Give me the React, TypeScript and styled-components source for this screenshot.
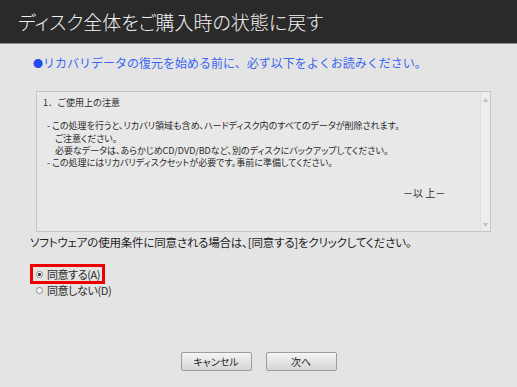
import { createGlobalStyle } from "styled-components";
import styled from "styled-components";

const GlobalStyle = createGlobalStyle`
    html, body {
        margin: 0;
        padding: 0;
        background-color: #e4e4e4;
    }
    body {
        font-family: "Noto Sans CJK JP", "Noto Sans", sans-serif;
        font-feature-settings: "palt";
    }
`

const StyledPage = styled.div`
    width: 517px;
    height: 387px;
    display: flex;
    flex-direction: column;
    background-color: #e4e4e4;
    overflow: hidden;
`

const StyledHeader = styled.div`
    height: 43px;
    display: flex;
    align-items: center;
    padding-left: 18px;
    background-color: #2a2a2a;
    border-bottom: 1px solid #8c8c8c;
    color: #f2f2f2;
    font-size: 19px;
    font-weight: 300;
`

const StyledNotice = styled.div`
    margin-top: 10px;
    padding-left: 33px;
    color: #3a66f0;
    font-size: 12px;
    line-height: 18px;
    font-feature-settings: normal;
`

const StyledBullet = styled.span`
    color: #1f4cf0;
    font-size: 10px;
`

const StyledTextBox = styled.div`
    margin: 18px 26px 0 36px;
    height: 139px;
    display: flex;
    border: 1px solid #c4c4c4;
    background-color: #e8e8e8;
`

const StyledTextContent = styled.div`
    flex-grow: 1;
    padding: 5px 0 0 6px;
    color: #2a2a2a;
    font-size: 9px;
    line-height: 12.3px;
`

const StyledLine = styled.div<{ $indent?: number; $gap?: number; $wide?: boolean }>`
    padding-left: ${p => p.$indent ?? 0}px;
    margin-top: ${p => p.$gap ?? 0}px;
    white-space: nowrap;
    font-feature-settings: ${p => (p.$wide ? "normal" : "\"palt\"")};
`

const StyledEnd = styled.div`
    margin-top: 18px;
    padding-left: 360px;
    font-size: 10px;
`

const StyledScrollbar = styled.div`
    width: 9px;
    display: flex;
    flex-direction: column;
    justify-content: space-between;
    align-items: center;
    background-color: #ededed;
    border-left: 1px solid #e0e0e0;
    color: #bdbdbd;
    font-size: 5px;
    padding: 4px 0;
`

const StyledAgreement = styled.div`
    margin-top: 2px;
    padding-left: 30px;
    color: #1e1e1e;
    font-size: 11.5px;
    line-height: 16px;
    letter-spacing: -0.2px;
`

const StyledRadioGroup = styled.div`
    margin-top: 14px;
    padding-left: 30px;
    display: flex;
    flex-direction: column;
    align-items: flex-start;
`

const StyledRadio = styled.label<{ $selected?: boolean }>`
    display: flex;
    align-items: center;
    gap: 4px;
    padding: 0 2px 0 3px;
    height: ${p => (p.$selected ? 14 : 12)}px;
    border: ${p => (p.$selected ? "3px solid #ee0000" : "0")};
    margin-left: ${p => (p.$selected ? 0 : 3)}px;
    color: #2a2a2a;
    font-size: 11px;
    letter-spacing: -0.4px;
`

const StyledDot = styled.span<{ $checked?: boolean }>`
    width: 5px;
    height: 5px;
    border-radius: 50%;
    border: 1px solid #8a8a8a;
    background: ${p => (p.$checked ? "radial-gradient(circle, #333 0 1.3px, #fafafa 1.6px)" : "#fafafa")};
`

const StyledButtons = styled.div`
    margin-top: auto;
    margin-bottom: 16px;
    display: flex;
    justify-content: center;
    gap: 14px;
`

const StyledButton = styled.button`
    width: 71px;
    height: 19px;
    padding: 0;
    border: 1px solid #9c9c9c;
    border-radius: 2px;
    background: linear-gradient(#f6f6f6, #e4e4e4 50%, #d6d6d6);
    color: #1e1e1e;
    font-family: inherit;
    font-feature-settings: "palt";
    font-size: 10px;
`

const App = () => {
    return (
        <>
            <GlobalStyle />
            <StyledPage>
                <StyledHeader>ディスク全体をご購入時の状態に戻す</StyledHeader>

                <StyledNotice>
                    <StyledBullet>●</StyledBullet>リカバリデータの復元を始める前に、必ず以下をよくお読みください。
                </StyledNotice>

                <StyledTextBox>
                    <StyledTextContent>
                        <StyledLine $wide>1．ご使用上の注意</StyledLine>
                        <StyledLine $gap={11} $indent={4}>- この処理を行うと、リカバリ領域も含め、ハードディスク内のすべてのデータが削除されます。</StyledLine>
                        <StyledLine $indent={12}>ご注意ください。</StyledLine>
                        <StyledLine $indent={12}>必要なデータは、あらかじめCD/DVD/BDなど、別のディスクにバックアップしてください。</StyledLine>
                        <StyledLine $indent={4}>- この処理にはリカバリディスクセットが必要です。事前に準備してください。</StyledLine>
                        <StyledEnd>－以 上－</StyledEnd>
                    </StyledTextContent>
                    <StyledScrollbar>
                        <span>▲</span>
                        <span>▼</span>
                    </StyledScrollbar>
                </StyledTextBox>

                <StyledAgreement>ソフトウェアの使用条件に同意される場合は、[同意する]をクリックしてください。</StyledAgreement>

                <StyledRadioGroup>
                    <StyledRadio $selected>
                        <StyledDot $checked />
                        同意する(A)
                    </StyledRadio>
                    <StyledRadio>
                        <StyledDot />
                        同意しない(D)
                    </StyledRadio>
                </StyledRadioGroup>

                <StyledButtons>
                    <StyledButton>キャンセル</StyledButton>
                    <StyledButton>次へ</StyledButton>
                </StyledButtons>
            </StyledPage>
        </>
    )
}

export default App
